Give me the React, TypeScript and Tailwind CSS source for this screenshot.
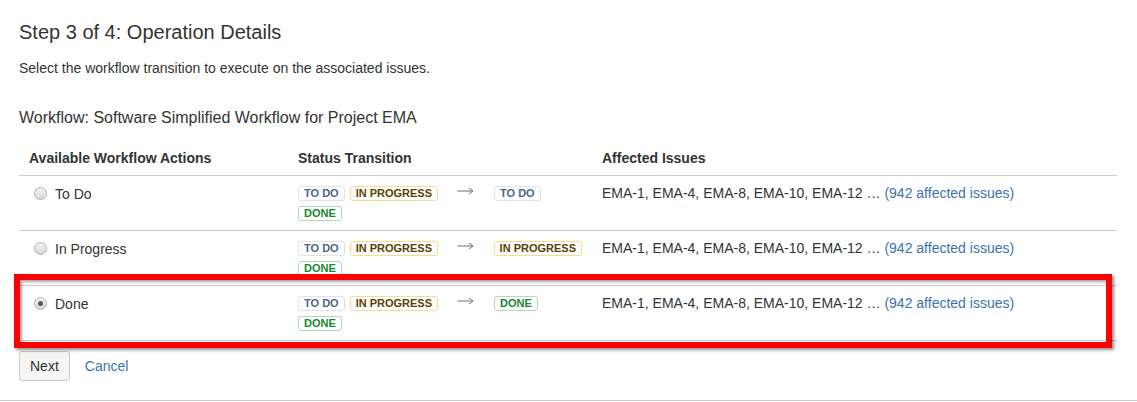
import React from 'react';

type Tone = 'todo' | 'progress' | 'done';

const toneClass: Record<Tone, string> = {
  todo: 'border-[#dfe3e8] text-[#4a6785]',
  progress: 'border-[#ffd98a] text-[#594300]',
  done: 'border-[#b2d8b9] text-[#14892c]',
};

const labels: Record<Tone, string> = {
  todo: 'To Do',
  progress: 'In Progress',
  done: 'Done',
};

const Lozenge: React.FC<{ tone: Tone }> = ({ tone }) => (
  <span className="h-[20px] flex items-center">
    <span
      className={`h-[15px] px-[5px] flex items-center whitespace-nowrap border rounded-[3px] bg-white text-[11px] font-bold uppercase leading-none ${toneClass[tone]}`}
    >
      {labels[tone]}
    </span>
  </span>
);

const Arrow = () => (
  <svg width="17" height="8" viewBox="0 0 17 8" className="-mt-[5px]">
    <path d="M0.5 4H16M12 1L16 4L12 7" fill="none" stroke="#707070" strokeWidth="1" />
  </svg>
);

const Radio: React.FC<{ checked?: boolean }> = ({ checked }) => (
  <span className="ml-[5px] w-[13px] h-[13px] rounded-full border border-[#b0b0b0] bg-gradient-to-b from-[#f4f4f4] to-[#d8d8d8] flex items-center justify-center">
    {checked && <span className="w-[5px] h-[5px] rounded-full bg-[#555]" />}
  </span>
);

const rows: { action: string; target: Tone; checked?: boolean }[] = [
  { action: 'To Do', target: 'todo' },
  { action: 'In Progress', target: 'progress' },
  { action: 'Done', target: 'done', checked: true },
];

export default function App() {
  return (
    <div className="relative w-[1137px] h-[402px] overflow-hidden bg-white text-[#333] font-['Liberation_Sans',Arial,sans-serif]">
      <div className="pl-[19px] pr-[20px] pt-[20px]">
        <h2 className="text-[20px] leading-[24px]">Step 3 of 4: Operation Details</h2>
        <p className="mt-[14px] text-[14px] leading-[20px]">
          Select the workflow transition to execute on the associated issues.
        </p>
        <h3 className="mt-[30px] text-[16px] leading-[20px]">
          Workflow: Software Simplified Workflow for Project EMA
        </h3>

        <div className="mt-[13px] text-[14px] leading-[20px]">
          <div className="grid grid-cols-[269px_304px_1fr] border-b border-[#ccc] font-bold">
            <div className="px-[10px] py-[7px]">Available Workflow Actions</div>
            <div className="px-[10px] py-[7px]">Status Transition</div>
            <div className="px-[10px] py-[7px]">Affected Issues</div>
          </div>
          {rows.map((r) => (
            <div key={r.action} className="grid grid-cols-[269px_304px_1fr] border-b border-[#ccc]">
              <div className="px-[10px] py-[7px]">
                <label className="flex items-center h-[20px] pt-[1px]">
                  <Radio checked={r.checked} />
                  <span className="ml-[8px]">{r.action}</span>
                </label>
              </div>
              <div className="px-[10px] py-[7px] flex items-start">
                <div className="w-[150px] flex flex-wrap gap-x-[5px]">
                  <Lozenge tone="todo" />
                  <Lozenge tone="progress" />
                  <Lozenge tone="done" />
                </div>
                <div className="ml-[9px] h-[20px] flex items-center">
                  <Arrow />
                </div>
                <div className="ml-[20px]">
                  <Lozenge tone={r.target} />
                </div>
              </div>
              <div className="px-[10px] py-[7px]">
                EMA-1, EMA-4, EMA-8, EMA-10, EMA-12 …{' '}
                <a className="text-[#3b73af]">(942 affected issues)</a>
              </div>
            </div>
          ))}
        </div>

        <div className="mt-[10px] flex items-center">
          <button className="h-[30px] px-[10px] border border-[#ccc] rounded-[3px] bg-[#f5f5f5] text-[14px] text-[#333]">
            Next
          </button>
          <a className="ml-[15px] text-[14px] text-[#3b73af]">Cancel</a>
        </div>
      </div>

      <div className="mt-[19px] border-t border-[#ccc]" />

      {/* annotation highlight */}
      <div className="absolute left-[14px] top-[274px] w-[1098px] h-[74px] border-[6px] border-[#ff0000] shadow-[2px_2px_3px_rgba(0,0,0,0.45),inset_2px_2px_3px_rgba(0,0,0,0.35)]" />
    </div>
  );
}
